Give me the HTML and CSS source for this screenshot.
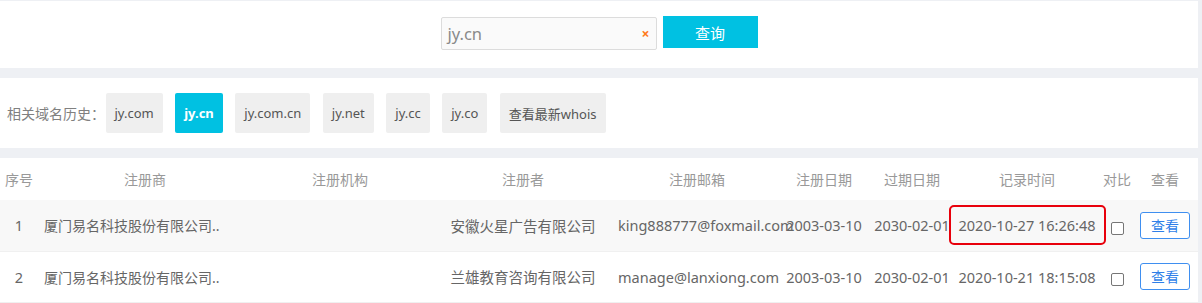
FILE: index.html
```html
<!DOCTYPE html>
<html lang="zh-CN">
<head>
    <meta charset="UTF-8">
    <meta name="viewport" content="width=device-width, initial-scale=1.0">
    <title>域名历史 | jy.cn</title>
    <link rel="stylesheet" href="styles.css">
</head>
<body>
    <div class="page">
        <div class="panel search-panel">
            <div class="search-box">
                <span class="search-text">jy.cn</span>
                <span class="search-clear">×</span>
            </div>
            <button class="search-btn">查询</button>
        </div>

        <div class="panel history-panel">
            <span class="history-label">相关域名历史：</span>
            <a class="tab" href="#">jy.com</a>
            <a class="tab tab-active" href="#">jy.cn</a>
            <a class="tab" href="#">jy.com.cn</a>
            <a class="tab" href="#">jy.net</a>
            <a class="tab" href="#">jy.cc</a>
            <a class="tab" href="#">jy.co</a>
            <a class="tab" href="#">查看最新whois</a>
        </div>

        <div class="panel table-panel">
            <table class="whois-table">
                <colgroup>
                    <col style="width: 38px">
                    <col style="width: 214px">
                    <col style="width: 176px">
                    <col style="width: 190px">
                    <col style="width: 158px">
                    <col style="width: 96px">
                    <col style="width: 80px">
                    <col style="width: 150px">
                    <col style="width: 30px">
                    <col style="width: 66px">
                </colgroup>
                <thead>
                    <tr>
                        <th>序号</th>
                        <th>注册商</th>
                        <th>注册机构</th>
                        <th>注册者</th>
                        <th>注册邮箱</th>
                        <th>注册日期</th>
                        <th>过期日期</th>
                        <th>记录时间</th>
                        <th>对比</th>
                        <th>查看</th>
                    </tr>
                </thead>
                <tbody>
                    <tr class="row-alt">
                        <td>1</td>
                        <td class="cell-left">厦门易名科技股份有限公司..</td>
                        <td></td>
                        <td>安徽火星广告有限公司</td>
                        <td>king888777@foxmail.com</td>
                        <td>2003-03-10</td>
                        <td>2030-02-01</td>
                        <td><span class="marked">2020-10-27 16:26:48</span></td>
                        <td><span class="check"></span></td>
                        <td><a class="view-btn" href="#">查看</a></td>
                    </tr>
                    <tr>
                        <td>2</td>
                        <td class="cell-left">厦门易名科技股份有限公司..</td>
                        <td></td>
                        <td>兰雄教育咨询有限公司</td>
                        <td>manage@lanxiong.com</td>
                        <td>2003-03-10</td>
                        <td>2030-02-01</td>
                        <td>2020-10-21 18:15:08</td>
                        <td><span class="check"></span></td>
                        <td><a class="view-btn" href="#">查看</a></td>
                    </tr>
                </tbody>
            </table>
        </div>
    </div>
</body>
</html>
```

FILE: styles.css
```css
* {
    box-sizing: border-box;
}

body {
    margin: 0;
    background-color: #eef0f4;
    font-family: 'Noto Sans', 'Noto Sans CJK SC', sans-serif;
    font-size: 14px;
    color: #666;
}

.page {
    width: 1198px;
    padding-top: 1px;
}

.panel {
    background-color: #fff;
}

/* search */

.search-panel {
    height: 67px;
    display: flex;
    justify-content: center;
    align-items: flex-start;
    gap: 6px;
    padding: 15px 0 0 0;
}

.search-box {
    width: 216px;
    height: 33px;
    margin-top: 1px;
    border: 1px solid #dcdcdc;
    border-radius: 2px;
    background-color: #fafafa;
    display: flex;
    align-items: center;
    justify-content: space-between;
    padding: 0 6px 0 6px;
}

.search-text {
    font-size: 16.5px;
    color: #8a8a8a;
}

.search-clear {
    color: #ff7a1a;
    font-size: 14px;
    font-weight: bold;
}

.search-btn {
    width: 95px;
    height: 32px;
    border: none;
    background-color: #00c1e2;
    color: #fff;
    font-family: 'Noto Sans CJK SC', sans-serif;
    font-size: 15px;
    padding: 0;
}

/* history tabs */

.history-panel {
    margin-top: 10px;
    height: 70px;
    display: flex;
    align-items: center;
    gap: 12.5px;
    padding-left: 7px;
}

.history-label {
    color: #808080;
    font-family: 'Noto Sans CJK SC', sans-serif;
    font-size: 14px;
    width: 86px;
    white-space: nowrap;
}

.tab {
    height: 40px;
    padding: 0 9px;
    display: flex;
    align-items: center;
    background-color: #efefef;
    border-radius: 2px;
    color: #555;
    font-size: 13px;
    text-decoration: none;
}

.tab-active {
    background-color: #00c1e2;
    color: #fff;
    font-weight: bold;
}

/* table */

.table-panel {
    margin-top: 10px;
}

.whois-table {
    width: 1198px;
    table-layout: fixed;
    border-collapse: collapse;
}

.whois-table th {
    height: 42px;
    font-weight: normal;
    color: #999;
    font-family: 'Noto Sans CJK SC', sans-serif;
    white-space: nowrap;
    padding: 0;
}

.whois-table td {
    height: 51px;
    text-align: center;
    white-space: nowrap;
    padding: 0;
    color: #666;
    font-size: 14.5px;
}

.whois-table tbody tr {
    border-bottom: 1px solid #f0f0f0;
}

.whois-table .cell-left {
    text-align: left;
    padding-left: 6px;
    font-size: 14px;
}

.row-alt {
    background-color: #f8f8f8;
}

.marked {
    position: relative;
}

.marked::after {
    content: "";
    position: absolute;
    top: -10px;
    bottom: -10px;
    left: -10px;
    right: -10px;
    border: 2.5px solid #e8000b;
    border-radius: 5px;
}

.check {
    display: inline-block;
    width: 13px;
    height: 13px;
    border: 1px solid #767676;
    border-radius: 2px;
    background-color: #fff;
    vertical-align: middle;
    margin-top: 2px;
}

.view-btn {
    display: inline-block;
    width: 50px;
    height: 27px;
    line-height: 25px;
    border: 1px solid #3f8ff0;
    border-radius: 3px;
    color: #2f7fe8;
    background-color: #fff;
    text-decoration: none;
    font-family: 'Noto Sans CJK SC', sans-serif;
    font-size: 14px;
}
```
